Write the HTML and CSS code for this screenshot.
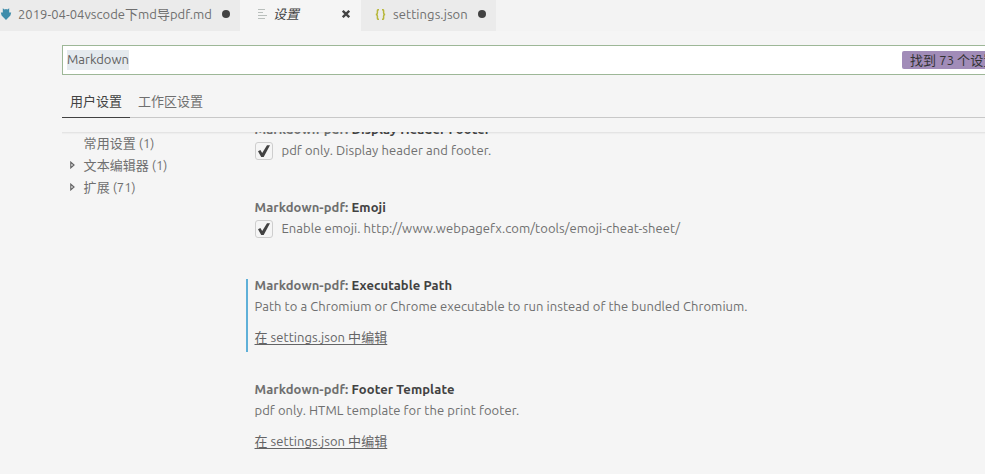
FILE: index.html
```html
<!DOCTYPE html>
<html lang="zh-CN">
<head>
<meta charset="utf-8">
<title>设置</title>
<link rel="stylesheet" href="styles.css">
</head>
<body>
<nav class="tabs">
  <div class="tab tab-md">
    <svg class="md-icon" width="12" height="12" viewBox="0 0 12 12"><path fill="#3f8dab" d="M2.8.3 4.6 1.6 6 .9 7.4 1.6 9.2.3V4.6L11.2 4.4 10.4 7.4 6 11.9 1.6 7.4.8 4.4 2.8 4.6Z"/></svg>
    <span class="name name-md">2019-04-04vscode下md导pdf.md</span>
    <i class="dot"></i>
  </div>
  <div class="tab tab-active">
    <svg class="lines-icon" width="10" height="10" viewBox="0 0 10 10"><path stroke="#b9bfbc" d="M1 .5h7M1 3.5h5M1 6.5h9M1 9.5h7"/></svg>
    <span class="name name-settings">设置</span>
    <svg class="close" width="8" height="8" viewBox="0 0 8 8"><path d="M.8.8 7.2 7.2M7.2.8.8 7.2" stroke="#424242" stroke-width="2.3"/></svg>
  </div>
  <div class="tab tab-json">
    <svg class="braces" width="11" height="11" viewBox="0 0 11 11"><path fill="none" stroke="#b7b73b" stroke-width="1.5" d="M4 .7H3.4Q2.4.7 2.4 1.8V4Q2.4 5.5.8 5.5 2.4 5.5 2.4 7V9.2Q2.4 10.3 3.4 10.3H4M7 .7H7.6Q8.6.7 8.6 1.8V4Q8.6 5.5 10.2 5.5 8.6 5.5 8.6 7V9.2Q8.6 10.3 7.6 10.3H7"/></svg>
    <span class="name name-json">settings.json</span>
    <i class="dot"></i>
  </div>
</nav>
<main class="editor">
  <div class="search"><span class="query">Markdown</span><span class="count">找到 73 个设置</span></div>
  <div class="scopes"><span class="scope scope-on">用户设置</span><span class="scope">工作区设置</span></div>
  <div class="body">
    <aside class="toc">
      <div class="toc-row"><span class="twist"></span><span>常用设置 (1)</span></div>
      <div class="toc-row"><span class="twist"><svg width="5" height="8" viewBox="0 0 5 8"><path fill="none" stroke="#646465" stroke-width="1.2" d="M.8 1.2V6.8L4 4Z"/></svg></span><span>文本编辑器 (1)</span></div>
      <div class="toc-row"><span class="twist"><svg width="5" height="8" viewBox="0 0 5 8"><path fill="none" stroke="#646465" stroke-width="1.2" d="M.8 1.2V6.8L4 4Z"/></svg></span><span>扩展 (71)</span></div>
    </aside>
    <div class="list">
      <section class="item check">
        <h3><span class="cat">Markdown-pdf: </span>Display Header Footer</h3>
        <div class="line"><span class="box"><svg width="18" height="18" viewBox="0 0 18 18"><path fill="#424242" d="M3 9.2 5.4 8 7.2 11 12 3.2H15L8.7 15H6.2Z"/></svg></span><span class="note">pdf only. Display header and footer.</span></div>
      </section>
      <section class="item check">
        <h3><span class="cat">Markdown-pdf: </span>Emoji</h3>
        <div class="line"><span class="box"><svg width="18" height="18" viewBox="0 0 18 18"><path fill="#424242" d="M3 9.2 5.4 8 7.2 11 12 3.2H15L8.7 15H6.2Z"/></svg></span><span class="note">Enable emoji. http://www.webpagefx.com/tools/emoji-cheat-sheet/</span></div>
      </section>
      <section class="item text modified">
        <h3><span class="cat">Markdown-pdf: </span>Executable Path</h3>
        <div class="line"><span>Path to a Chromium or Chrome executable to run instead of the bundled Chromium.</span></div>
        <div class="edit"><a>在 settings.json 中编辑</a></div>
      </section>
      <section class="item text">
        <h3><span class="cat">Markdown-pdf: </span>Footer Template</h3>
        <div class="line"><span class="note">pdf only. HTML template for the print footer.</span></div>
        <div class="edit"><a>在 settings.json 中编辑</a></div>
      </section>
    </div>
  </div>
</main>
</body>
</html>
```
FILE: styles.css
```css
* { box-sizing: border-box; }
body { margin: 0; height: 474px; overflow: hidden; background: #f5f5f5; color: #6f6f6f; font: 13px/22px "Ubuntu", "Noto Sans", "Noto Sans CJK SC", sans-serif; white-space: nowrap; }
svg { display: block; flex: none; }
.tabs { display: flex; height: 31px; background: #f3f3f3; }
.tab { display: flex; align-items: center; height: 31px; padding-bottom: 3px; background: #ebebeb; }
.tab-md { width: 240px; }
.tab-active { width: 121px; padding-left: 17px; background: #f5f5f5; color: #424242; }
.tab-json { width: 135px; padding-left: 14px; }
.name { flex: none; }
.name-md { width: 194px; margin-left: 6px; letter-spacing: .03px; }
.name-settings { width: 26px; margin-left: 6px; font-style: italic; }
.name-json { width: 75px; margin-left: 7px; letter-spacing: .08px; }
.dot { width: 8px; height: 8px; margin-left: 10px; border-radius: 50%; background: #424242; }
.md-icon { width: 12px; }
.close { margin-left: 43px; }
.editor { padding: 14px 0 0 62px; }
.search { display: flex; align-items: center; justify-content: space-between; height: 30px; padding-left: 4px; border: 1px solid #9db797; border-right: 0; background: #fff; color: #616161; }
.query { width: 62px; height: 20px; background: #e5eaee; line-height: 18px; }
.count { width: 83px; height: 18px; padding-left: 8px; overflow: hidden; border-radius: 2px 0 0 2px; background: #a18cb8; color: #333; letter-spacing: .08px; line-height: 18px; }
.scopes { display: flex; height: 43px; padding-top: 12px; border-bottom: 1px solid #c8c8c8; }
.scope { height: 31px; padding: 0 8px; line-height: 28px; }
.scope-on { border-bottom: 1px solid #424242; color: #424242; }
.body { display: flex; height: 342px; margin-top: 14px; overflow: hidden; box-shadow: inset 0 3px 2px -2px #ddd; }
.toc { width: 184px; }
.toc-row { display: flex; height: 22px; letter-spacing: .04px; }
.twist { display: flex; align-items: center; width: 21.6px; padding-left: 8px; }
.list { flex: 1; margin-top: -20px; letter-spacing: .055px; }
.item { padding-left: 8.5px; }
.check { height: 78px; padding-top: 6px; }
.text { height: 104px; padding-top: 6px; }
h3 { height: 21px; margin: 0; color: #424242; font-size: 13px; font-weight: 700; letter-spacing: .09px; line-height: 22px; }
.cat { color: #6f6f6f; }
.line { display: flex; align-items: center; height: 21px; }
.note { letter-spacing: .07px; }
.box { width: 18px; height: 18px; margin: 2px 9px 0 0; border: 1px solid #cecece; border-radius: 3px; }
.box svg { margin: -1px; }
.modified { position: relative; }
.modified::before { content: ""; position: absolute; left: 0; top: 11px; width: 2px; height: 73px; background: #5fb0d8; }
.edit { height: 22px; margin-top: 10px; }
a { color: #646465; text-decoration: underline; text-underline-offset: 2px; }
```
